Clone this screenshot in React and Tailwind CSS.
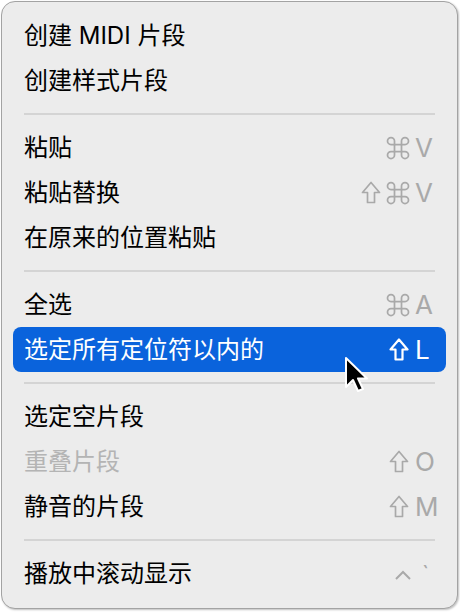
import React from 'react';
import { Command } from 'lucide-react';

const font = { fontFamily: 'Inter, "Noto Sans CJK SC", sans-serif' };

const Shift = ({ bold }) => (
  <svg width="20" height="23" viewBox="0 0 20 23" fill="none">
    <path
      d="M10 1.5 L18.5 11.5 H13.5 V21.5 H6.5 V11.5 H1.5 Z"
      stroke="currentColor"
      strokeWidth={bold ? 2.2 : 1.7}
      strokeLinejoin="round"
    />
  </svg>
);

const Cmd = () => <Command size={28} strokeWidth={1.5} className="-mx-[3px]" />;

const Keys = ({ mods = [], k, bold }) => (
  <div className="flex items-center">
    <div className="flex items-center justify-end gap-[6px] mr-[6px]">
      {mods.map((m, i) => (m === 'shift' ? <Shift key={i} bold={bold} /> : <Cmd key={i} />))}
    </div>
    <span className="w-[20px] text-[26px] leading-none">{k}</span>
  </div>
);

const items = [
  { label: '创建 MIDI 片段' },
  { label: '创建样式片段' },
  'sep',
  { label: '粘贴', mods: ['cmd'], k: 'V' },
  { label: '粘贴替换', mods: ['shift', 'cmd'], k: 'V' },
  { label: '在原来的位置粘贴' },
  'sep',
  { label: '全选', mods: ['cmd'], k: 'A' },
  { label: '选定所有定位符以内的', mods: ['shift'], k: 'L', active: true },
  'sep',
  { label: '选定空片段' },
  { label: '重叠片段', mods: ['shift'], k: 'O', disabled: true },
  { label: '静音的片段', mods: ['shift'], k: 'M' },
  'sep',
  { label: '播放中滚动显示', control: true },
];

export default function App() {
  return (
    <div className="w-[460px] h-[612px] bg-white pt-[1px] pl-[1px]" style={font}>
      <div className="relative w-[457px] h-[608px] rounded-[14px] border border-[#a3a3a3] bg-[#ececec] shadow-[1px_1px_2px_rgba(0,0,0,0.25)] px-[11px] pt-[11px]">
        {items.map((it, i) =>
          it === 'sep' ? (
            <div key={i} className="h-[22px] flex items-center px-[11px]">
              <div className="w-full h-[2px] bg-[#d4d4d4]" />
            </div>
          ) : (
            <div
              key={i}
              className={`h-[45px] flex items-center justify-between pl-[11px] pr-[11px] rounded-[8px] ${
                it.active ? 'bg-[#0a63dc] text-white' : it.disabled ? 'text-[#b4b4b4]' : 'text-black'
              }`}
            >
              <span className="text-[24px] leading-none">{it.label}</span>
              {it.k && (
                <div className={it.active ? 'text-white' : 'text-[#a9a9a9]'}>
                  <Keys mods={it.mods} k={it.k} bold={it.active} />
                </div>
              )}
              {it.control && (
                <div className="flex items-start text-[#a9a9a9] mr-[6px]">
                  <svg width="18" height="12" viewBox="0 0 18 12" fill="none" className="mt-[6px]">
                    <path d="M2 10 L9 3 L16 10" stroke="currentColor" strokeWidth="2" />
                  </svg>
                  <span className="ml-[10px] text-[22px] leading-none">`</span>
                </div>
              )}
            </div>
          )
        )}
        <svg
          className="absolute left-[341px] top-[353px]"
          width="28"
          height="40"
          viewBox="0 0 28 40"
        >
          <path
            d="M3 3 V32 L10 25 L15 36 L20 34 L15 23.5 H24 Z"
            fill="#000"
            stroke="#fff"
            strokeWidth="2"
            strokeLinejoin="round"
          />
        </svg>
      </div>
    </div>
  );
}
